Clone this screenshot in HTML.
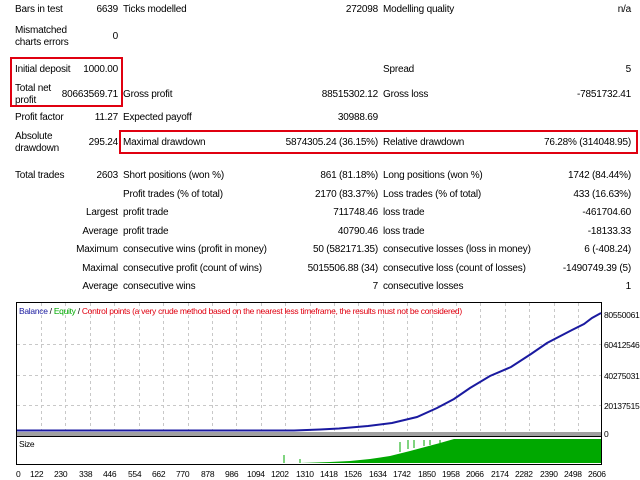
<!DOCTYPE html>
<html><head><meta charset="utf-8"><style>
body{margin:0;width:640px;height:480px;background:#fff;position:relative;overflow:hidden;font-family:"Liberation Sans",sans-serif;font-size:10px;letter-spacing:-0.2px;color:#000}
.t{position:absolute;white-space:nowrap;line-height:12px}
.r{text-align:right}
.box{position:absolute;border:2px solid #e00010;box-sizing:border-box}
.s{font-size:8.5px;letter-spacing:-0.3px}
</style></head><body>
<div class="t" style="left:15px;top:4px">Bars in test</div><div class="t r" style="right:522px;top:4px">6639</div>
<div class="t" style="left:123px;top:4px">Ticks modelled</div><div class="t r" style="right:262px;top:4px">272098</div>
<div class="t" style="left:383px;top:4px">Modelling quality</div><div class="t r" style="right:9px;top:4px">n/a</div>
<div class="t" style="left:15px;top:25px">Mismatched<br>charts errors</div><div class="t r" style="right:522px;top:31px">0</div>
<div class="t" style="left:15px;top:64px">Initial deposit</div><div class="t r" style="right:522px;top:64px">1000.00</div>
<div class="t" style="left:383px;top:64px">Spread</div><div class="t r" style="right:9px;top:64px">5</div>
<div class="t" style="left:15px;top:83px">Total net<br>profit</div><div class="t r" style="right:522px;top:89px">80663569.71</div>
<div class="t" style="left:123px;top:89px">Gross profit</div><div class="t r" style="right:262px;top:89px">88515302.12</div>
<div class="t" style="left:383px;top:89px">Gross loss</div><div class="t r" style="right:9px;top:89px">-7851732.41</div>
<div class="t" style="left:15px;top:112px">Profit factor</div><div class="t r" style="right:522px;top:112px">11.27</div>
<div class="t" style="left:123px;top:112px">Expected payoff</div><div class="t r" style="right:262px;top:112px">30988.69</div>
<div class="t" style="left:15px;top:131px">Absolute<br>drawdown</div><div class="t r" style="right:522px;top:137px">295.24</div>
<div class="t" style="left:123px;top:137px">Maximal drawdown</div><div class="t r" style="right:262px;top:137px">5874305.24 (36.15%)</div>
<div class="t" style="left:383px;top:137px">Relative drawdown</div><div class="t r" style="right:9px;top:137px">76.28% (314048.95)</div>
<div class="box" style="left:10px;top:57px;width:113px;height:50px"></div>
<div class="box" style="left:119px;top:130px;width:519px;height:24px"></div>
<div class="t" style="left:15px;top:170px">Total trades</div><div class="t r" style="right:522px;top:170px">2603</div>
<div class="t" style="left:123px;top:170px">Short positions (won %)</div><div class="t r" style="right:262px;top:170px">861 (81.18%)</div>
<div class="t" style="left:383px;top:170px">Long positions (won %)</div><div class="t r" style="right:9px;top:170px">1742 (84.44%)</div>
<div class="t" style="left:123px;top:189px">Profit trades (% of total)</div><div class="t r" style="right:262px;top:189px">2170 (83.37%)</div>
<div class="t" style="left:383px;top:189px">Loss trades (% of total)</div><div class="t r" style="right:9px;top:189px">433 (16.63%)</div>
<div class="t r" style="right:522px;top:207px">Largest</div>
<div class="t" style="left:123px;top:207px">profit trade</div><div class="t r" style="right:262px;top:207px">711748.46</div>
<div class="t" style="left:383px;top:207px">loss trade</div><div class="t r" style="right:9px;top:207px">-461704.60</div>
<div class="t r" style="right:522px;top:226px">Average</div>
<div class="t" style="left:123px;top:226px">profit trade</div><div class="t r" style="right:262px;top:226px">40790.46</div>
<div class="t" style="left:383px;top:226px">loss trade</div><div class="t r" style="right:9px;top:226px">-18133.33</div>
<div class="t r" style="right:522px;top:244px">Maximum</div>
<div class="t" style="left:123px;top:244px">consecutive wins (profit in money)</div><div class="t r" style="right:262px;top:244px">50 (582171.35)</div>
<div class="t" style="left:383px;top:244px">consecutive losses (loss in money)</div><div class="t r" style="right:9px;top:244px">6 (-408.24)</div>
<div class="t r" style="right:522px;top:263px">Maximal</div>
<div class="t" style="left:123px;top:263px">consecutive profit (count of wins)</div><div class="t r" style="right:262px;top:263px">5015506.88 (34)</div>
<div class="t" style="left:383px;top:263px">consecutive loss (count of losses)</div><div class="t r" style="right:9px;top:263px">-1490749.39 (5)</div>
<div class="t r" style="right:522px;top:281px">Average</div>
<div class="t" style="left:123px;top:281px">consecutive wins</div><div class="t r" style="right:262px;top:281px">7</div>
<div class="t" style="left:383px;top:281px">consecutive losses</div><div class="t r" style="right:9px;top:281px">1</div>

<svg style="position:absolute;left:0;top:0" width="640" height="480">
<g stroke="#c8c8c8" stroke-dasharray="3,3" stroke-width="1">
<line x1="17" y1="344.5" x2="601" y2="344.5"/><line x1="17" y1="375.5" x2="601" y2="375.5"/><line x1="17" y1="405.5" x2="601" y2="405.5"/>
<line x1="41.5" y1="303" x2="41.5" y2="431"/><line x1="65.5" y1="303" x2="65.5" y2="431"/><line x1="90.5" y1="303" x2="90.5" y2="431"/><line x1="114.5" y1="303" x2="114.5" y2="431"/><line x1="139.5" y1="303" x2="139.5" y2="431"/><line x1="163.5" y1="303" x2="163.5" y2="431"/><line x1="188.5" y1="303" x2="188.5" y2="431"/><line x1="212.5" y1="303" x2="212.5" y2="431"/><line x1="236.5" y1="303" x2="236.5" y2="431"/><line x1="261.5" y1="303" x2="261.5" y2="431"/><line x1="285.5" y1="303" x2="285.5" y2="431"/><line x1="310.5" y1="303" x2="310.5" y2="431"/><line x1="334.5" y1="303" x2="334.5" y2="431"/><line x1="358.5" y1="303" x2="358.5" y2="431"/><line x1="383.5" y1="303" x2="383.5" y2="431"/><line x1="407.5" y1="303" x2="407.5" y2="431"/><line x1="432.5" y1="303" x2="432.5" y2="431"/><line x1="456.5" y1="303" x2="456.5" y2="431"/><line x1="480.5" y1="303" x2="480.5" y2="431"/><line x1="505.5" y1="303" x2="505.5" y2="431"/><line x1="529.5" y1="303" x2="529.5" y2="431"/><line x1="554.5" y1="303" x2="554.5" y2="431"/><line x1="578.5" y1="303" x2="578.5" y2="431"/>
</g>
<rect x="16.5" y="302.5" width="585" height="162" fill="none" stroke="#000"/>
<rect x="17" y="432" width="584" height="4" fill="#a0a0a0"/>
<line x1="17" y1="436.5" x2="601" y2="436.5" stroke="#000"/>
<polyline fill="none" stroke="#1a1aa0" stroke-width="2" points="17,430.5 294,430.5 320,429.5 339,428.5 368,426 392,423 417,417 437,408 454,399 470,388 490,376 511,367 531,354 547,343 572,330 584,324 592,318 601,313"/>
<polygon fill="#00a800" points="300,463 330,462 350,461 370,459 390,456 410,451 425,447 440,443 454,439 601,439 601,463"/>
<g stroke="#00a800"><line x1="284" y1="463" x2="284" y2="455"/><line x1="300" y1="463" x2="300" y2="459"/><line x1="400" y1="452" x2="400" y2="442"/><line x1="408" y1="449" x2="408" y2="440"/><line x1="414" y1="448" x2="414" y2="440"/><line x1="424" y1="446" x2="424" y2="440"/><line x1="430" y1="445" x2="430" y2="440"/><line x1="440" y1="443" x2="440" y2="440"/></g>
</svg>
<div class="t s" style="left:19px;top:305px"><span style="color:#1a1aa0">Balance</span> / <span style="color:#00a800">Equity</span> / <span style="color:#e00010">Control points (a very crude method based on the nearest less timeframe, the results must not be considered)</span></div>
<div class="t s" style="left:19px;top:438px">Size</div>
<div class="t s" style="left:604px;top:309px">80550061</div>
<div class="t s" style="left:604px;top:339px">60412546</div>
<div class="t s" style="left:604px;top:370px">40275031</div>
<div class="t s" style="left:604px;top:400px">20137515</div>
<div class="t s" style="left:604px;top:428px">0</div>
<div class="t s" style="left:16px;top:468px">
<span style="position:absolute;left:0">0</span><span style="position:absolute;left:14px">122</span><span style="position:absolute;left:38px">230</span><span style="position:absolute;left:63px">338</span><span style="position:absolute;left:87px">446</span><span style="position:absolute;left:112px">554</span><span style="position:absolute;left:136px">662</span><span style="position:absolute;left:160px">770</span><span style="position:absolute;left:185px">878</span><span style="position:absolute;left:209px">986</span><span style="position:absolute;left:231px">1094</span><span style="position:absolute;left:255px">1202</span><span style="position:absolute;left:280px">1310</span><span style="position:absolute;left:304px">1418</span><span style="position:absolute;left:328px">1526</span><span style="position:absolute;left:353px">1634</span><span style="position:absolute;left:377px">1742</span><span style="position:absolute;left:402px">1850</span><span style="position:absolute;left:426px">1958</span><span style="position:absolute;left:450px">2066</span><span style="position:absolute;left:475px">2174</span><span style="position:absolute;left:499px">2282</span><span style="position:absolute;left:524px">2390</span><span style="position:absolute;left:548px">2498</span><span style="position:absolute;left:572px">2606</span>
</div>
</body></html>
